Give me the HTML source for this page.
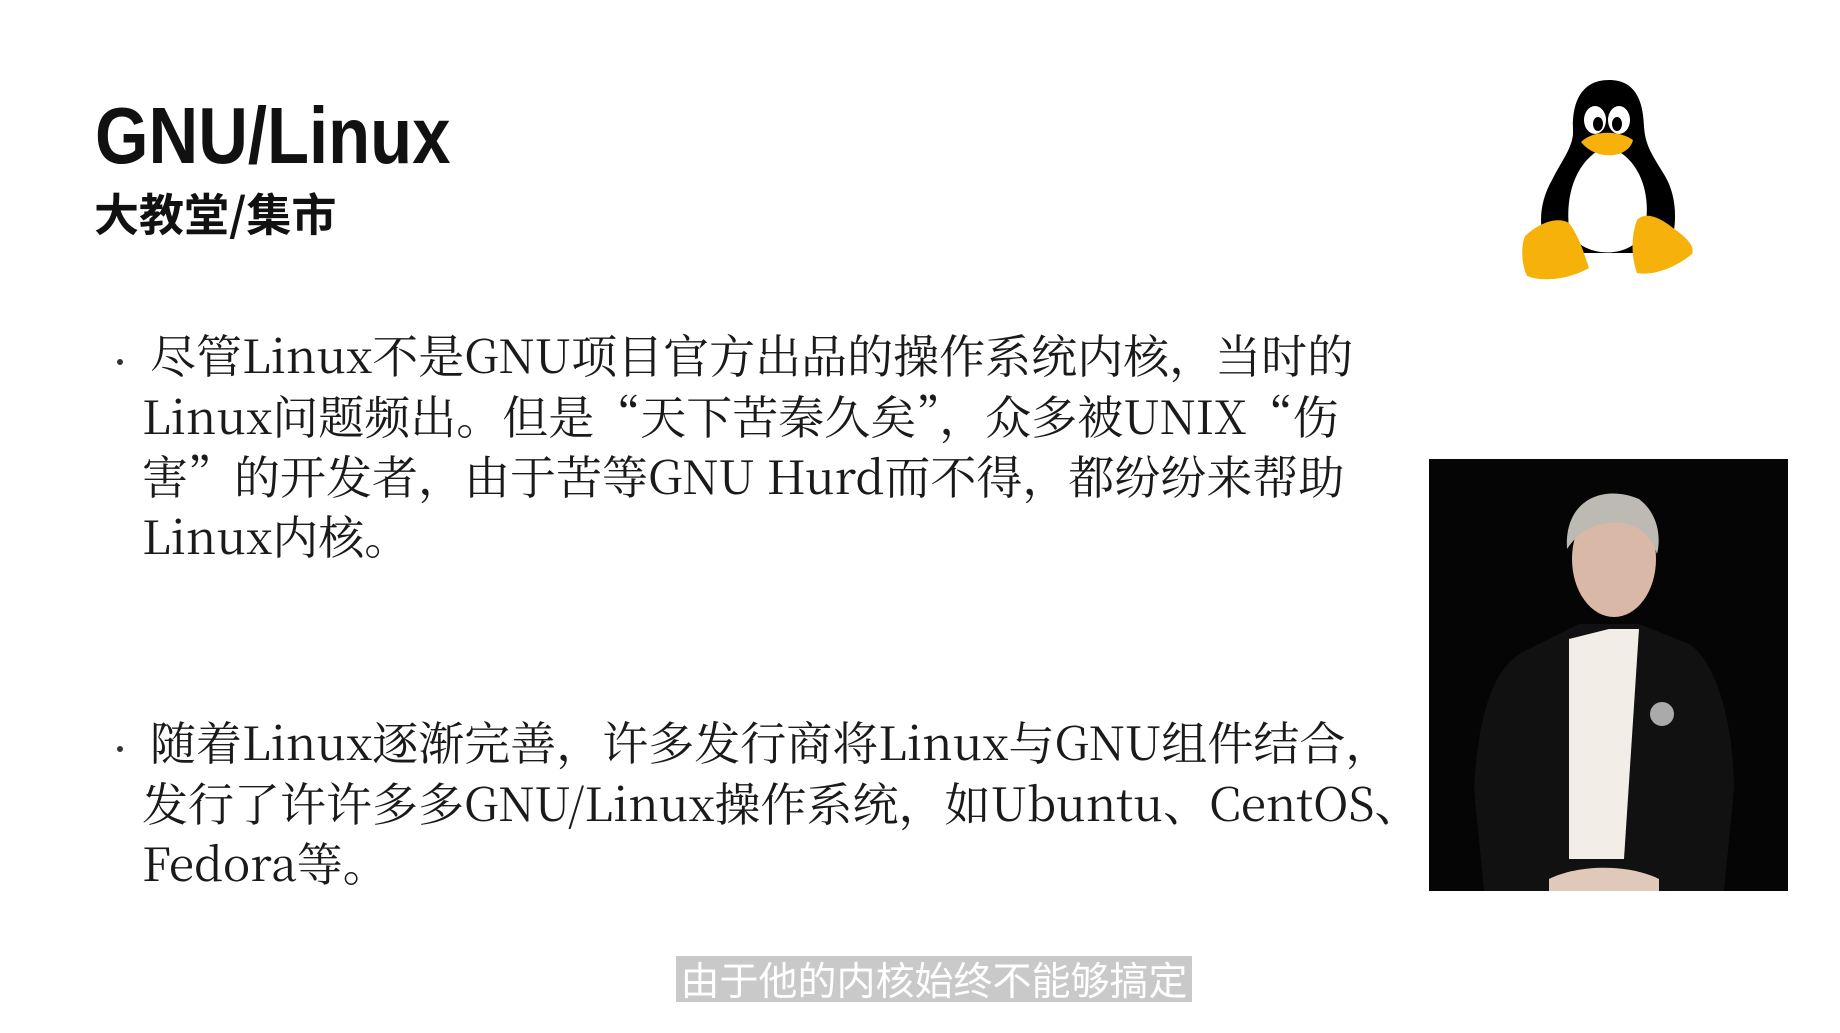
<!DOCTYPE html>
<html><head><meta charset="utf-8"><style>
body{margin:0;width:1840px;height:1033px;background:#fff;position:relative;overflow:hidden}
.t{position:absolute;left:95px;top:88px;font:bold 80px "Liberation Sans","Noto Sans CJK SC",sans-serif;color:#111;transform:scaleX(0.86);transform-origin:0 0;line-height:96px;white-space:nowrap}
.s{position:absolute;left:94px;top:182px;font:bold 45px "Noto Sans CJK SC",sans-serif;color:#111;line-height:60px;white-space:nowrap}
.b{position:absolute;left:142px;font:46px "Noto Serif CJK SC","Liberation Serif",serif;color:#1a1a1a;line-height:60px;white-space:nowrap}
.dot{position:absolute;left:117px;width:6px;height:6px;background:#333;border-radius:50%}
.cap{position:absolute;left:676px;top:956px;width:516px;height:46px;background:#c9c9c9;color:#fff;font:39px "Noto Sans CJK SC",sans-serif;line-height:46px;text-align:center;white-space:nowrap}
.photo{position:absolute;left:1429px;top:459px;width:359px;height:432px;background:#050505;overflow:hidden}
</style></head><body>
<div class="t">GNU/Linux</div>
<div class="s">大教堂/集市</div>
<div class="dot" style="top:359px"></div>
<div class="b" style="top:324px;left:150px">尽管Linux不是GNU项目官方出品的操作系统内核，当时的</div>
<div class="b" style="top:385px">Linux问题频出。但是“天下苦秦久矣”，众多被UNIX“伤</div>
<div class="b" style="top:445px">害”的开发者，由于苦等GNU Hurd而不得，都纷纷来帮助</div>
<div class="b" style="top:505px">Linux内核。</div>
<div class="dot" style="top:746px"></div>
<div class="b" style="top:711px;left:150px">随着Linux逐渐完善，许多发行商将Linux与GNU组件结合，</div>
<div class="b" style="top:772px">发行了许许多多GNU/Linux操作系统，如Ubuntu、CentOS、</div>
<div class="b" style="top:832px">Fedora等。</div>

<svg style="position:absolute;left:1517px;top:78px" width="180" height="210" viewBox="0 0 180 210">
<path d="M92 2 C62 2 55 28 56 52 C57 68 45 82 35 102 C22 125 20 150 32 175 L150 175 C162 150 160 118 148 98 C136 78 128 68 127 48 C126 22 118 2 92 2Z" fill="#000"/>
<path d="M90 68 C60 80 48 115 52 150 C58 180 118 185 128 150 C135 115 122 78 90 68Z" fill="#fff"/>
<ellipse cx="78" cy="42" rx="11" ry="14" fill="#fff"/><ellipse cx="102" cy="42" rx="11" ry="14" fill="#fff"/>
<ellipse cx="81" cy="46" rx="5" ry="7" fill="#000"/><ellipse cx="100" cy="46" rx="5" ry="7" fill="#000"/>
<path d="M64 64 C76 52 102 52 116 62 C112 80 80 84 64 64Z" fill="#f6b20a"/>
<path d="M8 158 C22 145 40 138 52 145 C62 158 68 178 72 190 C55 200 28 205 10 198 C4 185 4 168 8 158Z" fill="#f6b20a"/>
<path d="M120 142 C130 132 146 142 156 150 C170 160 178 168 175 176 C158 190 136 198 120 195 C114 178 114 158 120 142Z" fill="#f6b20a"/>
</svg>

<div class="photo">
<svg width="359" height="432" viewBox="0 0 359 432">
<path d="M55 432 L45 330 C50 250 65 205 100 190 L150 165 L210 165 L260 185 C285 200 305 260 305 330 L295 432Z" fill="#111"/>
<path d="M140 180 L180 170 L210 170 L195 400 L140 400 Z" fill="#f2ede6"/>
<ellipse cx="185" cy="100" rx="42" ry="58" fill="#d9b8a8"/>
<path d="M138 90 C135 40 175 25 210 40 C230 55 232 80 228 95 C220 70 200 60 175 65 C155 68 145 80 138 90Z" fill="#bdbab3"/>
<circle cx="233" cy="255" r="12" fill="#aaa"/>
<path d="M120 420 C150 405 200 405 230 420 L230 432 L120 432Z" fill="#e0c8bb"/>
</svg>
</div>
<div class="cap">由于他的内核始终不能够搞定</div>
</body></html>
